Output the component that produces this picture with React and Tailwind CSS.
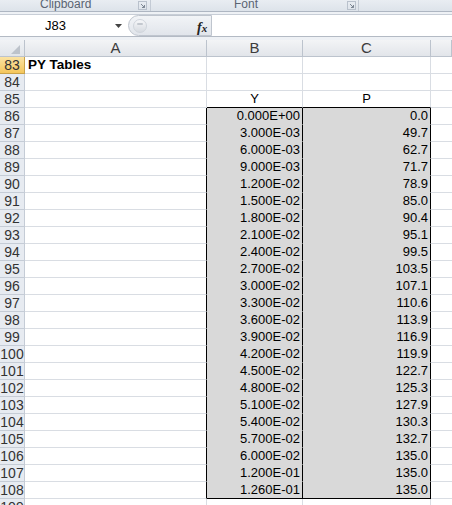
import React from "react";

const Y = [
  "0.000E+00","3.000E-03","6.000E-03","9.000E-03","1.200E-02","1.500E-02","1.800E-02","2.100E-02","2.400E-02","2.700E-02","3.000E-02","3.300E-02","3.600E-02","3.900E-02","4.200E-02","4.500E-02","4.800E-02","5.100E-02","5.400E-02","5.700E-02","6.000E-02","1.200E-01","1.260E-01",
];
const P = [
  "0.0","49.7","62.7","71.7","78.9","85.0","90.4","95.1","99.5","103.5","107.1","110.6","113.9","116.9","119.9","122.7","125.3","127.9","130.3","132.7","135.0","135.0","135.0",
];

function Launcher() {
  return (
    <svg width="9" height="9" viewBox="0 0 9 9" className="block">
      <rect x="0.5" y="0.5" width="8" height="8" fill="none" stroke="#b9c1cc" />
      <path d="M3 3 L6.5 6.5 M4 6.5 H6.5 V4" stroke="#7d8794" strokeWidth="1" fill="none" />
    </svg>
  );
}

function RowHeader({ n, active }) {
  return (
    <div
      className={
        "h-[17px] flex items-end justify-center border-r border-b text-[14px] leading-[16px] text-[#333] " +
        (active
          ? "bg-gradient-to-b from-[#fbe3a3] to-[#f4c65a] border-[#c9a24a]"
          : "bg-[#e7ebf1] border-[#c5ccd6]")
      }
    >
      {n}
    </div>
  );
}

export default function App() {
  const rows = [];
  for (let r = 83; r <= 109; r++) rows.push(r);

  return (
    <div
      className="w-[452px] h-[505px] overflow-hidden bg-white select-none"
      style={{ fontFamily: '"Liberation Sans", Arial, sans-serif' }}
    >
      {/* Ribbon group labels */}
      <div className="h-[12px] flex bg-gradient-to-b from-[#e9edf2] to-[#dde3ea] border-b border-[#aeb6c2] overflow-hidden text-[12px] text-[#5a6472]">
        <div className="w-[151px] border-r border-[#c4cbd5] relative">
          <span className="absolute left-[40px] top-[-3px] leading-[14px]">Clipboard</span>
          <span className="absolute left-[138px] top-[1px]"><Launcher /></span>
        </div>
        <div className="w-[208px] border-r border-[#c4cbd5] relative">
          <span className="absolute left-[83px] top-[-3px] leading-[14px]">Font</span>
          <span className="absolute left-[196px] top-[1px]"><Launcher /></span>
        </div>
        <div className="flex-1" />
      </div>

      {/* Formula bar */}
      <div className="h-[25px] bg-[#eef1f5] pt-[2px] border-b border-[#b3bac4]">
        <div className="h-[22px] flex bg-white border-t border-[#c8ced7]">
          <div className="w-[128px] flex items-center relative text-[13px] text-black">
            <span className="ml-[45px]">J83</span>
            <svg width="7" height="4" viewBox="0 0 7 4" className="absolute left-[115px] top-[9px]">
              <path d="M0 0 H7 L3.5 4 Z" fill="#444" />
            </svg>
          </div>
          <div className="w-[84px] flex items-center rounded-l-full border border-[#bfc5ce] bg-gradient-to-b from-[#f2f4f7] to-[#e1e5eb] relative">
            <div className="ml-[4px] w-[14px] h-[14px] rounded-full bg-gradient-to-b from-[#f6f7f9] to-[#d7dbe1] border border-[#d0d5dc] flex items-start justify-center">
              <div className="mt-[3px] w-[6px] h-[2px] rounded-full bg-[#c3c8cf]" />
            </div>
            <span
              className="absolute left-[68px] top-[1px] text-[14px] italic font-bold text-[#222]"
              style={{ fontFamily: '"Liberation Serif", "Times New Roman", serif' }}
            >
              f<span className="text-[11px]">x</span>
            </span>
          </div>
          <div className="flex-1 bg-white" />
        </div>
      </div>

      <div className="h-[3px] bg-[#eef1f5]" />

      {/* Sheet grid */}
      <div className="grid grid-cols-[25px_182px_96px_128px_1fr]">
        {/* Column header row */}
        <div className="h-[17px] bg-gradient-to-b from-[#f1f3f6] to-[#e1e5ea] border-r border-b border-[#bcc3cd] relative">
          <svg width="9" height="9" viewBox="0 0 9 9" className="absolute right-[4px] bottom-[2px]">
            <path d="M9 0 V9 H0 Z" fill="#bdc3cb" />
          </svg>
        </div>
        {["A", "B", "C", ""].map((c, i) => (
          <div
            key={i}
            className="h-[17px] flex items-end justify-center bg-gradient-to-b from-[#f3f4f6] to-[#e2e5ea] border-r border-b border-[#bcc3cd] text-[15px] leading-[16px] text-[#3c3c3c]"
          >
            {c}
          </div>
        ))}

        {rows.map((r) => {
          const inTable = r >= 86 && r <= 108;
          const idx = r - 86;
          const topRow = r === 85;
          const lastRow = r === 108;
          const dataCls =
            "h-[17px] flex items-end text-[13px] leading-[16px] text-black " +
            (inTable
              ? "bg-[#d9d9d9] justify-end pr-[2px] border-r border-r-black " +
                (lastRow ? "border-b border-b-black" : "border-b border-b-[#d9d9d9]")
              : "justify-center border-r border-r-[#d9dde3] " +
                (topRow ? "border-b border-b-black" : "border-b border-b-[#d9dde3]"));
          return (
            <React.Fragment key={r}>
              <RowHeader n={r} active={r === 83} />
              <div
                className={
                  "h-[17px] flex items-end border-b border-[#d9dde3] text-[13.5px] leading-[16px] text-black pl-[3px] " +
                  (inTable ? "border-r border-r-black" : "border-r border-r-[#d9dde3]")
                }
              >
                {r === 83 ? <span className="font-bold">PY Tables</span> : null}
              </div>
              <div className={dataCls}>{inTable ? Y[idx] : topRow ? "Y" : ""}</div>
              <div className={dataCls}>{inTable ? P[idx] : topRow ? "P" : ""}</div>
              <div className="h-[17px] border-b border-[#d9dde3]" />
            </React.Fragment>
          );
        })}
      </div>
    </div>
  );
}
